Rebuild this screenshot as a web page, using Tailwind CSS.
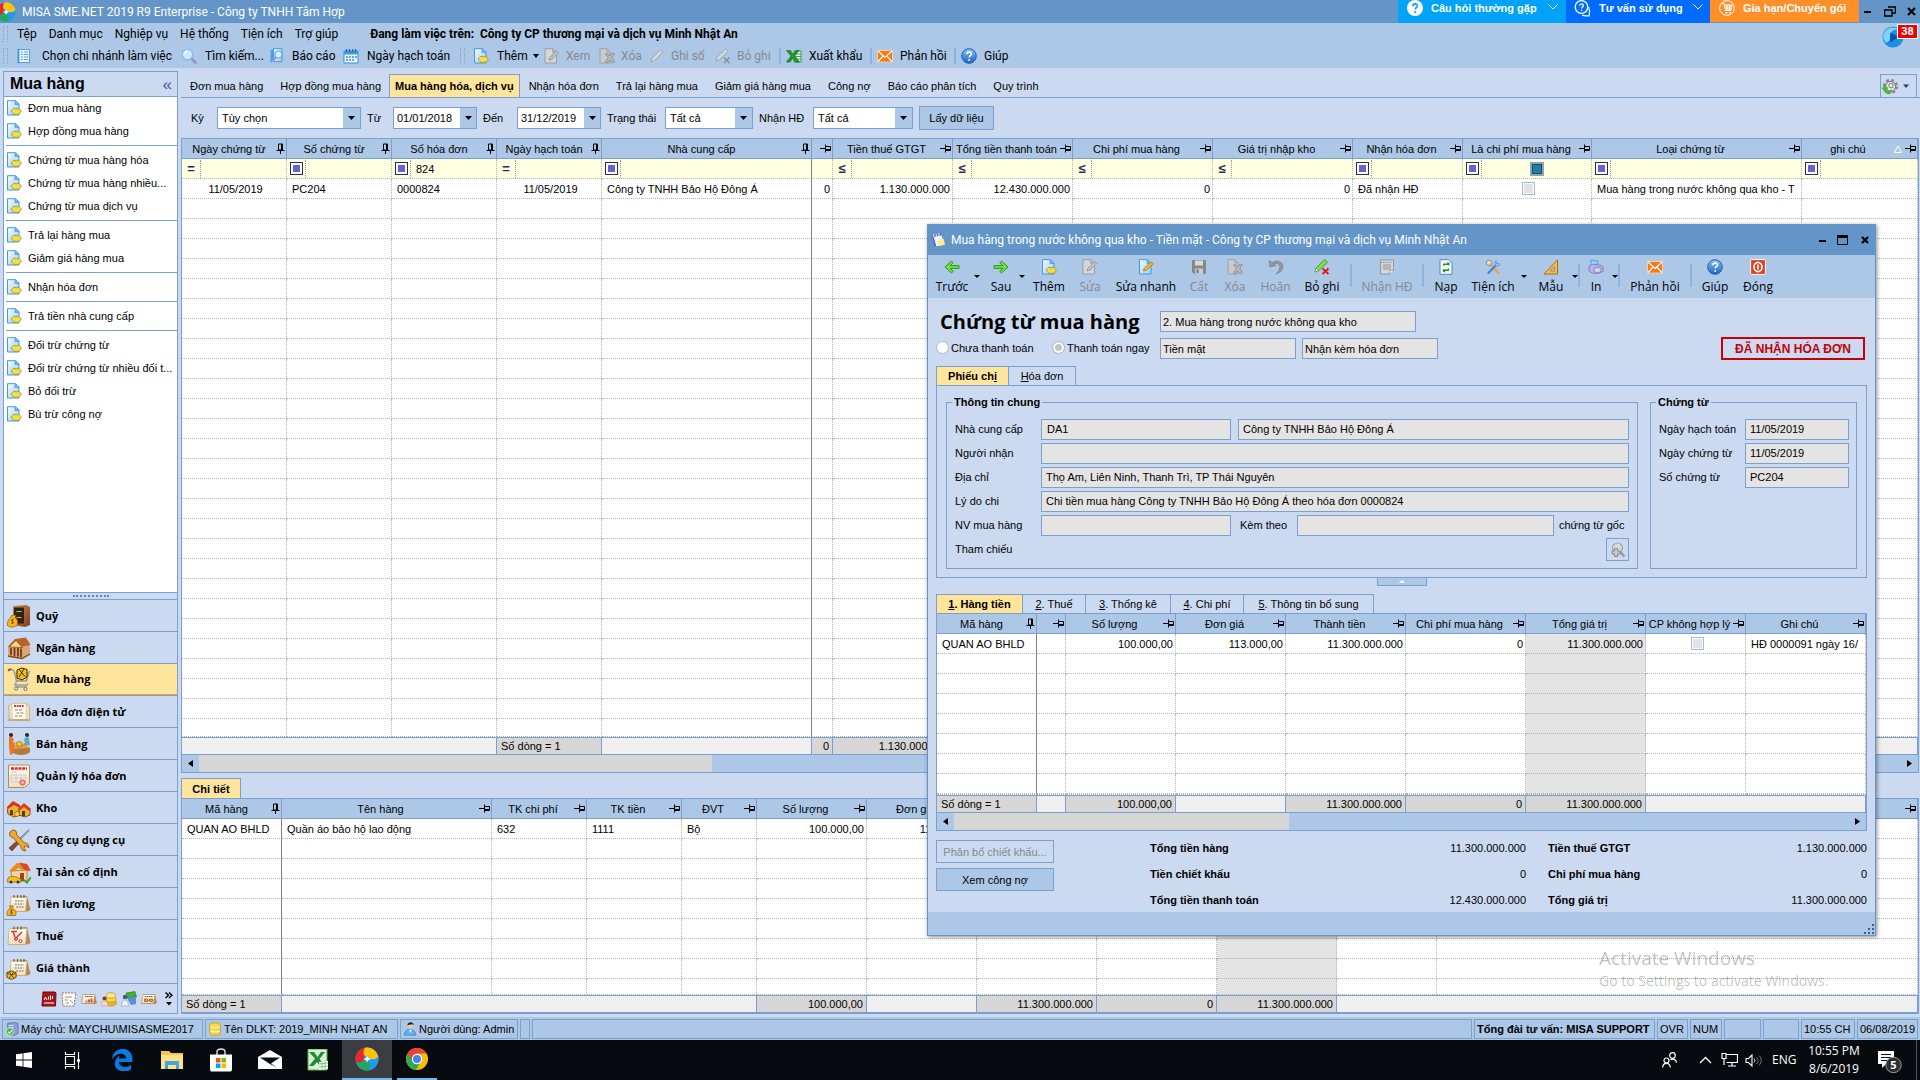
<!DOCTYPE html>
<html lang="vi">
<head>
<meta charset="utf-8">
<title>MISA SME.NET 2019 R9 Enterprise</title>
<script src="https://cdn.jsdelivr.net/npm/@tailwindcss/browser@4"></script>
</head>
<body class="relative flex h-screen min-h-[900px] flex-col overflow-hidden bg-[#cbdaf0] font-['Liberation_Sans',Arial,sans-serif] text-[11px] leading-4 text-black">

<!-- Icon sprite -->
<svg width="0" height="0" class="absolute" aria-hidden="true">
  <defs>
    <linearGradient id="gpage" x1="0" y1="0" x2="1" y2="1"><stop offset="0" stop-color="#f4fbff"/><stop offset="1" stop-color="#9dccf2"/></linearGradient>
    <linearGradient id="gblue" x1="0" y1="0" x2="0" y2="1"><stop offset="0" stop-color="#8cc4f7"/><stop offset="1" stop-color="#1a62c4"/></linearGradient>
    <linearGradient id="gbrown" x1="0" y1="0" x2="1" y2="1"><stop offset="0" stop-color="#c98a5a"/><stop offset="1" stop-color="#7a3f20"/></linearGradient>
    <linearGradient id="gpaper" x1="0" y1="0" x2="0" y2="1"><stop offset="0" stop-color="#fffdf6"/><stop offset="1" stop-color="#f1dfc2"/></linearGradient>
  </defs>
  <symbol id="misa" viewBox="0 0 24 24"><circle cx="12" cy="12" r="11.500" fill="#2b9be8"/><path d="M12 .5A11.500 11.500 0 0 0 1 15c3 2 7 0 8-3 .5-3-1-5 3-11.500z" fill="#e8262c"/><path d="M10 .7c6-1.500 12 3 13.300 9-2 3-6 4-9 1.300C12 9 8 9 8.500 5c.2-2 1-3.500 1.500-4.300z" fill="#fdc20a"/><path d="M1 15c2 5.500 7 9 12.500 8.300 3-2.500 3-6.500 0-9-2-1.500-4-1-6.500.5-2 1-4 1-6 .2z" fill="#22a85a"/><path d="M23.400 10c.8 6-3 12-9.900 13.300 2.500-3 2-6 0-9 1-2 3-1.500 5-2 2-.3 3.500-1 4.900-2.300z" fill="#1c9cf0"/><path d="M12 9l1.500 2 2.500 1-2.500 1-1.500 2.500-1-2.500-2.500-1 2.500-1z" fill="#fff"/></symbol>
  <symbol id="docadd" viewBox="0 0 16 16"><path d="M1.500.7h8L13 4v11H1.500z" fill="url(#gpage)" stroke="#3f9ae0"/><path d="M9 .7V4.500h4" fill="#6fb6ee" stroke="#3f9ae0" stroke-width=".7"/><path d="M5 11l1.500-1.500L8 8.200l2.200.6 2.300-.6 1.200 1.300L15.500 11l-1.200 1.600-1.300 1.600-2.500.2-2.500-.1-1.600-1.500z" fill="#efe04a" stroke="#a39014" stroke-width=".8"/></symbol>
  <symbol id="docedit" viewBox="0 0 16 16"><path d="M1.500.7h8L13 4v11H1.500z" fill="url(#gpage)" stroke="#3f9ae0"/><path d="M9 .7V4.500h4" fill="#6fb6ee" stroke="#3f9ae0" stroke-width=".7"/><path d="M5.500 12l.8-2.800 7-6.400 2 2-7 6.400z" fill="#f5b72e" stroke="#9a6b10" stroke-width=".7"/></symbol>
  <symbol id="doceditg" viewBox="0 0 16 16"><path d="M1 .7h8L12.500 4v11H1z" fill="#d4d6d9" stroke="#9a9ea3"/><path d="M8.500 .7V4.500h4" fill="#b3b6ba" stroke="#9a9ea3" stroke-width=".7"/><path d="M5 12l.8-2.800 7-6.400 2 2-7 6.400z" fill="#c0c2c5" stroke="#888" stroke-width=".7"/></symbol>
  <symbol id="docdelg" viewBox="0 0 16 16"><path d="M1 .7h7L11 4v11H1z" fill="#c9cbce" stroke="#9a9ea3"/><path d="M7.500 .7V4.500h4" fill="#aaadb1"/><path d="M6.500 6l2-.5 2.200 2.500 2.500-3 2 .7-2.500 4 2.800 4-2 1.200-2.700-3-2.500 3-2-1.200 3-4z" fill="#b9bbbe" stroke="#7f8286" stroke-width=".8"/></symbol>
  <symbol id="list" viewBox="0 0 16 16"><path d="M2.500 1.500h11v13h-11z" fill="#eef7ff" stroke="#4ba3e3"/><path d="M2.500 1v14" stroke="#2d8ad6" stroke-width="2" stroke-dasharray="1.500 1"/><path d="M5 4h2M5 6.500h2M5 9h2M5 11.500h2M8 4h4M8 6.500h4M8 9h4M8 11.500h4" stroke="#4ba3e3"/></symbol>
  <symbol id="search" viewBox="0 0 16 16"><path d="M10 10l4.500 4.500" stroke="#8f96c8" stroke-width="2.600" stroke-linecap="round"/><circle cx="6.500" cy="6.500" r="5.300" fill="#cfeaff" stroke="#7fbdf0" stroke-width="1.300"/><path d="M3.500 6a3.200 3.200 0 0 1 3-2.700" stroke="#fff" stroke-width="1.400" fill="none"/></symbol>
  <symbol id="report" viewBox="0 0 16 16"><path d="M1.500 2.500l3-2v12l-3 2.500z" fill="#4ba3e3"/><path d="M4.500.7H13v13H4.500z" fill="url(#gpage)" stroke="#3f9ae0"/><path d="M7 9l-3 4" stroke="#8f96c8" stroke-width="2"/><circle cx="9.500" cy="6.500" r="3.500" fill="#d8efff" stroke="#6aa5dc" stroke-width="1.200"/></symbol>
  <symbol id="cal" viewBox="0 0 16 16"><path d="M1 3h14v12H1z" fill="#f2f9ff" stroke="#2f8fd8"/><path d="M1 3h14v3.500H1z" fill="#3f9ae0"/><path d="M3.500 1v3M6.500 1v3M9.500 1v3M12.500 1v3" stroke="#1b6cb4" stroke-width="1.200"/><path d="M3 9h2M6 9h2M9 9h2M12 9h2M3 12h2M6 12h2M9 12h2" stroke="#2f8fd8" stroke-width="1.600"/></symbol>
  <symbol id="pen" viewBox="0 0 16 16"><path d="M2 14l1-4L11.500 1.500l2.500 2.500L5.500 12.800z" fill="#d5d7da" stroke="#9a9ea3" stroke-width=".9"/></symbol>
  <symbol id="penx" viewBox="0 0 16 16"><path d="M1 13l1-4L10.500.8l2.500 2.500L4.500 11.800z" fill="#d5d7da" stroke="#9a9ea3" stroke-width=".9"/><path d="M9 9.500l5.500 5.500M14.500 9.500L9 15" stroke="#8a8d90" stroke-width="1.400"/></symbol>
  <symbol id="penxc" viewBox="0 0 16 16"><path d="M1 13l1-4L10.500.8 13.500 3.300 4.500 11.800z" fill="#7ee04a" stroke="#3e9a1e" stroke-width=".9"/><path d="M2 9l2.500 2.800L1 13z" fill="#fff" stroke="#3e9a1e" stroke-width=".5"/><path d="M8.500 9.500l6 5.500M14.500 9.500l-6 5.500" stroke="#e51515" stroke-width="1.800"/></symbol>
  <symbol id="xls" viewBox="0 0 16 16"><path d="M8 3h7v11H8z" fill="#e9f7e6" stroke="#1d8a2c" stroke-width=".8"/><path d="M9 6h6M9 8.500h6M9 11h6" stroke="#1d8a2c" stroke-width=".8"/><path d="M.5 2.500h4l2.500 4 3-4h3L8.800 8l4.700 6H9.500L6.800 10 4 14H.5L5 8z" fill="#1d9a2c" stroke="#0c6a1a" stroke-width=".6"/></symbol>
  <symbol id="mail" viewBox="0 0 16 16"><path d="M.5 2.500h15v11.500H.5z" fill="#f47b17" stroke="#ffd9b0" stroke-width=".8"/><path d="M1 3l7 6.500L15 3M1 13.500l5.200-5.500M15 13.500L9.800 8" stroke="#fff" stroke-width="1.100" fill="none"/></symbol>
  <symbol id="help" viewBox="0 0 16 16"><circle cx="8" cy="8" r="7.300" fill="url(#gblue)" stroke="#1f5fb5"/><path d="M5.800 6.200c0-3 4.600-3 4.600-.3 0 1.800-2.200 1.700-2.200 3.600" stroke="#fff" stroke-width="1.500" fill="none"/><circle cx="8.200" cy="12" r="1" fill="#fff"/></symbol>
  <symbol id="left" viewBox="0 0 16 16"><path d="M1 8l6.500-6 1.700 1.700L6.300 6.600H15v2.800H6.300l2.900 2.900L7.500 14z" fill="#6ee04a" stroke="#2c9a1c" stroke-width="1"/></symbol>
  <symbol id="right" viewBox="0 0 16 16"><path d="M15 8L8.500 2 6.800 3.700l2.900 2.900H1v2.800h8.700l-2.900 2.900L8.500 14z" fill="#6ee04a" stroke="#2c9a1c" stroke-width="1"/></symbol>
  <symbol id="save" viewBox="0 0 16 16"><path d="M1 1h14v14H3l-2-2z" fill="#85888c"/><path d="M4 1.500h8v5H4z" fill="#d9dadc"/><path d="M4 9.500h8V15H4z" fill="#c9cbce"/><path d="M5.500 10.500h2V14h-2z" fill="#6d7074"/></symbol>
  <symbol id="undo" viewBox="0 0 16 16"><path d="M1 1.500l1 6.500 6-1.500-2-1.300c3-1.800 6-.2 5.800 3C11.600 11 10 13 8 14.800c4-.8 6.800-3.500 7-7C15.200 3 9.500.2 4 3.500z" fill="#94979b" stroke="#777a7e" stroke-width=".6"/></symbol>
  <symbol id="invg" viewBox="0 0 16 16"><path d="M1.500 1h13v10l-3.500 4H1.500z" fill="#d3d5d8" stroke="#92959a"/><path d="M1.500 3.500h13" stroke="#92959a" stroke-dasharray="1.500 1"/><path d="M4 6h8M4 8h8M4 10h8" stroke="#92959a"/><path d="M11 15v-3.500h3.500" fill="#fff" stroke="#92959a" stroke-width=".8"/></symbol>
  <symbol id="reload" viewBox="0 0 16 16"><path d="M2 .7h8.500L14 4v11.300H2z" fill="#fff" stroke="#4f86c8"/><path d="M5 7V4.500h4.500L8.500 3l3 .8V7L10.300 6H7z" fill="#159a2a"/><path d="M11 9v3H7l.8 1.500-3-.7V9.500l1.200 1H9z" fill="#159a2a"/></symbol>
  <symbol id="tools" viewBox="0 0 16 16"><path d="M4.500 4.500l9 9.500" stroke="#e7a84e" stroke-width="2.600" stroke-linecap="round"/><circle cx="4" cy="3.800" r="2.700" fill="#e9dcc2" stroke="#8c8c8c"/><path d="M12 5L3.500 14" stroke="#3d8bdc" stroke-width="2.400" stroke-linecap="round"/><path d="M11 1.500l.5 2.800 3.500.6-.5 1.800-3.500.3L9.500 5z" fill="#8ec4f2" stroke="#3d8bdc" stroke-width=".6"/></symbol>
  <symbol id="ruler" viewBox="0 0 16 16"><path d="M14.500.8V15H1z" fill="#f0bd55" stroke="#a9711b"/><path d="M11.500 7.500V12H7z" fill="#adc7e7" stroke="#a9711b" stroke-width=".7"/></symbol>
  <symbol id="print" viewBox="0 0 16 16"><path d="M3 1l7 1-1 6-6-1z" fill="#8ed0fa" stroke="#3f8fd0" stroke-width=".7"/><path d="M1 7c2-2 12-2 14 1v4c-2 3-11 3.500-14 0z" fill="#b7b4e2" stroke="#7571b8" stroke-width=".8"/><ellipse cx="9.500" cy="11" rx="3.600" ry="2.800" fill="#d3d1f0" stroke="#7571b8" stroke-width=".7"/></symbol>
  <symbol id="power" viewBox="0 0 16 16"><rect x=".6" y=".6" width="14.800" height="14.800" rx="1" fill="#e2411c" stroke="#fff"/><ellipse cx="8" cy="8" rx="4" ry="4.600" fill="none" stroke="#fff" stroke-width="1.700"/><path d="M8 5.500v5" stroke="#fff" stroke-width="1.600"/></symbol>
  <symbol id="zoomg" viewBox="0 0 16 16"><path d="M10 10l4.500 4.500" stroke="#9a9da1" stroke-width="2.600"/><circle cx="7.500" cy="6" r="5" fill="#d8d9db" stroke="#a2a4a7" stroke-width="1.200"/><path d="M4.500 6.500h3v2.500h2.500v3H7.500V14.500h-3V12H2V9h2.500z" fill="#c9cacc" stroke="#7f8286" stroke-width=".9"/></symbol>
  <symbol id="note" viewBox="0 0 16 16"><path d="M1 3l10-2.500 3.500 12L4 15z" fill="#5b55c8"/><path d="M3 4.500l9-2 3 10.500-9 2z" fill="#e8f6ff"/><path d="M8 8l6.500-1.500 1.500 7-8 1.500z" fill="#ffe98a"/><path d="M3 1.500v3M6 1v3M9 .3v3" stroke="#e8ebff" stroke-width="1.200"/></symbol>
  <symbol id="pinv" viewBox="0 0 9 12"><path d="M2.500 1h4v6h-4zM.5 7.500h8M4.500 7.500V11M5.500 1v6" stroke="#000" fill="none"/></symbol>
  <symbol id="pinh" viewBox="0 0 12 9"><path d="M5.500 2.500h5v4h-5zM5.500.5v8M0 4.500h5.500M6 5.500h4.500" stroke="#000" fill="none"/></symbol>
  <symbol id="n-quy" viewBox="0 0 24 24"><path d="M6 2l13-1 4 2v18l-5 2-12-2z" fill="url(#gbrown)"/><path d="M7 3.500h10v16H7z" fill="#3a1e10"/><path d="M8.500 5h7v5h-7z" fill="#1f2a1a"/><path d="M9.500 7.500h5M9.500 13.500h5" stroke="#b9c44a" stroke-width="1.200"/><path d="M4 12l3-1 2 .5-1 2c3 2 3 5 2 8-3 2-7 2-9.500 0C0 18 1.500 15 4 13.500z" fill="#f3b71c" stroke="#8a5a08" stroke-width=".7"/><path d="M6.800 15.800c-2-1-3.200 1-1.200 1.700s1 2.600-1.400 1.600M5.500 14.800v5" stroke="#7a3b00" stroke-width=".8" fill="none"/></symbol>
  <symbol id="n-bank" viewBox="0 0 24 24"><path d="M1 12L10 3l12 2.500L23 11v8l-8 4-14-2z" fill="#d9a678"/><path d="M.5 11L8 3l11-1.500L23.500 9l-8 1.500z" fill="#b5642e"/><path d="M2 11L9 4.500l6.500 7z" fill="#f5dd7a" stroke="#8a4a18" stroke-width=".8"/><path d="M4 12v7M7.500 12v8M11 12v8.500M14 12.500V21" stroke="#6e3512" stroke-width="1.700"/><path d="M1 20l14 2.500L23 18" stroke="#8a4a18" stroke-width="1.400" fill="none"/></symbol>
  <symbol id="n-cart" viewBox="0 0 24 24"><path d="M1 3l3-1 3 2 2.500 10h10L22 5l1-1" stroke="#9a9aa0" stroke-width="1.400" fill="none"/><path d="M1 3.500l3-1.300" stroke="#a0522d" stroke-width="2"/><path d="M8 6h14M8.500 8.500h13M9 11h12M11 5v9M15 5v9M19 5v9" stroke="#8c8c92" stroke-width=".7"/><path d="M10 3l5-2 5 1.500V10l-5 3-5-2z" fill="#f2c21a" stroke="#3c2a05" stroke-width="1"/><path d="M12 2.500l6 7M17 2l-5 8" stroke="#3c2a05" stroke-width="1"/><path d="M9.500 14l-1.500 4h12l1-2M9 20h11" stroke="#9a9aa0" stroke-width="1.300" fill="none"/><circle cx="9" cy="21.500" r="1.600" fill="#e5e5ea" stroke="#777"/><circle cx="18.500" cy="22" r="1.600" fill="#e5e5ea" stroke="#777"/></symbol>
  <symbol id="n-einv" viewBox="0 0 24 24"><path d="M1.500 6l3-2h15l3 2v13l-1 1H2.500z" fill="#efe0c2" stroke="#c9a264" stroke-width=".8"/><path d="M5 3.500h14v16H5z" fill="#fffdf4" stroke="#d8bd8c" stroke-width=".7"/><path d="M7 6h10" stroke="#e03a2a" stroke-width="1.800" stroke-dasharray="2 .6"/><path d="M8 10h8M9.500 13h7M8 16h8" stroke="#8a6f4a" stroke-width=".9" stroke-dasharray="3 1"/><path d="M.5 20h23" stroke="#c9a264" stroke-width="1.600"/></symbol>
  <symbol id="n-sell" viewBox="0 0 24 24"><ellipse cx="14" cy="17" rx="9" ry="5" fill="#d8a15a"/><path d="M5 17v3c3 4 15 4 18 0v-4" fill="#b9783a"/><circle cx="4" cy="3" r="2" fill="#3a2412"/><path d="M2 5l4 .5L8 12l-1 6-2 5-2-.5-1-8z" fill="#e9772a"/><circle cx="20" cy="3" r="2" fill="#2a2a2a"/><path d="M17.500 6l4-1 1.500 8h-6z" fill="#5fa3bf"/><path d="M6 9l6 4 6-3" stroke="#f0c090" stroke-width="1.600" fill="none"/><path d="M9 11l4-2 3 4-5 2z" fill="#f3c521" stroke="#8a5a08" stroke-width=".6"/></symbol>
  <symbol id="n-inv" viewBox="0 0 24 24"><path d="M1.500 1h21v18l-5 4.500h-16z" fill="url(#gpaper)" stroke="#b98a50"/><path d="M4 4.500h16" stroke="#e02a2a" stroke-width="2.600" stroke-dasharray="3 .7"/><path d="M4 8h6M4 11h15v7H4zM4 14h15M9 11v7M14 11v7" stroke="#c8c0c4" stroke-width=".8" fill="none"/><circle cx="15.500" cy="18.500" r="2.600" fill="#f5a9a0" stroke="#d84a4a"/></symbol>
  <symbol id="n-kho" viewBox="0 0 24 24"><path d="M0 12l5-5 8 3v9l-6 2-6-3z" fill="#e2b83a" stroke="#7a2a10" stroke-width=".8"/><path d="M0 11l6-6 7 4v3L7 9l-6 4z" fill="#d8321c"/><path d="M12 13l5-4 6 4v6l-5 2-6-2z" fill="#e2b83a" stroke="#7a2a10" stroke-width=".8"/><path d="M11 13l6-6 7 6-2 2-5-4-5 4z" fill="#e0391f"/><path d="M3 14h3v5H3zM15 15h3v5h-3z" fill="#6e3512"/><circle cx="10" cy="18" r="2.500" fill="#f7d44a" stroke="#8a5a08" stroke-width=".7"/></symbol>
  <symbol id="n-tool" viewBox="0 0 24 24"><path d="M22 2L10 14" stroke="#8d949c" stroke-width="1.800"/><path d="M11 12l2 2-8 9-3-3z" fill="#8a4a30" stroke="#4a2414" stroke-width=".6"/><path d="M3 4l3-2c3 0 4 2 3.500 4.500l8 8.500c3 0 5 2 4 5l-2-2-2 .5-.5 2 2 2c-3 1-5-1-5-4L6 9.500C3 9.500 2 7 3 4z" fill="#f0a92a" stroke="#7a4a08" stroke-width=".8"/></symbol>
  <symbol id="n-asset" viewBox="0 0 24 24"><path d="M4 11l16-1v11H5z" fill="#f2d7a0" stroke="#a85a1a" stroke-width=".7"/><path d="M2 11l8-8 11 2 2.500 6-8-1-4-2-6 4z" fill="#f0861f"/><path d="M12 2.500l8 1.500 3.500 7-6-1z" fill="#dd4a1c"/><path d="M13 13h4v8h-4z" fill="#a8430f"/><path d="M1 18c2-2 8-2 10 0l3 1v3H0z" fill="#f5c41c" stroke="#8a5a08" stroke-width=".7"/><circle cx="4" cy="22" r="1.500" fill="#333"/><circle cx="11" cy="22" r="1.500" fill="#333"/><path d="M17 20l3 2.500L24 17" stroke="#3aa82a" stroke-width="2" fill="none"/></symbol>
  <symbol id="n-cal" viewBox="0 0 24 24"><path d="M4 5l16-1 3.500 14-3 1.500H4z" fill="#b98a50"/><path d="M4 5h16l-1.500 14.500H3z" fill="url(#gpaper)" stroke="#c9a264" stroke-width=".7"/><path d="M7 3v3M10.500 3v3M14 3v3M17 3v3" stroke="#6a5a4a" stroke-width="1.100"/><path d="M8 9h9M7.500 12h9M9 15h8" stroke="#7a6a5a" stroke-dasharray="2 .8"/></symbol>
  <symbol id="n-bag" viewBox="0 0 12 12"><path d="M4 1h4L7 3.500c4 2 4.500 5 3.500 8h-9C.5 8.500 1 5.500 5 3.500z" fill="#f3b71c" stroke="#8a5a08" stroke-width=".8"/><path d="M7.500 5.800c-2-1-3.300 1-1.500 1.700s1 2.500-1.500 1.500M6 4.800v5.500" stroke="#7a3b00" stroke-width=".8" fill="none"/></symbol>
  <symbol id="n-box" viewBox="0 0 12 12"><path d="M1 4l5-2 5 2v5l-5 2.500L1 9z" fill="#f0c02a" stroke="#5a3b05"/><path d="M3.500 3l5 7M8.500 3l-5 7M1 4.500l5 2 5-2" stroke="#5a3b05" stroke-width=".9" fill="none"/></symbol>
  <symbol id="n-tax" viewBox="0 0 24 24"><path d="M5 4l15-1 3.500 16-3 1.500H5z" fill="#b98a50"/><path d="M2 4.500h18L18.500 20.500H1z" fill="url(#gpaper)" stroke="#c9a264" stroke-width=".7"/><path d="M7 2.500v3M10.500 2.500v3M14 2.500v3" stroke="#6a5a4a" stroke-width="1.100"/><path d="M4 7.500h6M6 7.500L8 13M15 8L8 15" stroke="#e03030" stroke-width="1.500"/><circle cx="9" cy="15" r="1.500" fill="none" stroke="#e03030"/><circle cx="13.500" cy="17" r="1.500" fill="none" stroke="#e03030"/></symbol>
  <symbol id="s-book" viewBox="0 0 16 16"><path d="M2 1h12l1 1-.5 13H1z" fill="#a8161c" stroke="#6a0a10"/><path d="M3 9l1.500-3L6 9M7.500 8.500v-3M9.500 9V4.500M11.500 8V5M3 12h10" stroke="#fff" stroke-width="1" fill="none"/></symbol>
  <symbol id="s-doc" viewBox="0 0 16 16"><path d="M1 2h14l-2 13H2z" fill="#fffdf6" stroke="#8a7a60" stroke-dasharray="2 1"/><path d="M4 6h7M4 9h3M9 9l3 3M5 12h3" stroke="#9a8a9a"/></symbol>
  <symbol id="s-chart" viewBox="0 0 16 16"><path d="M3 3.500h11L16 12l-2 1H2z" fill="#b98a50"/><path d="M2 3.500h12L12.500 12.500H.5z" fill="url(#gpaper)" stroke="#b98a50" stroke-width=".7"/><path d="M4 5.500h8" stroke="#6a5a4a" stroke-dasharray="1.500 .5"/><path d="M5.500 11.500V9.500" stroke="#4a9ad0" stroke-width="2"/><path d="M8 11.500V8.500M10.500 11.500V7.500" stroke="#e05030" stroke-width="2"/></symbol>
  <symbol id="s-plan" viewBox="0 0 16 16"><path d="M3 3.500h11L16 12l-2 1H2z" fill="#b98a50"/><path d="M2 3.500h12L12.500 12.500H.5z" fill="url(#gpaper)" stroke="#b98a50" stroke-width=".7"/><path d="M4 5.500h8" stroke="#6a5a4a" stroke-dasharray="1.500 .5"/><path d="M3.500 8h3v2.500h-3zM8.500 8h3v2.500h-3zM6.500 9.200h2" fill="#e9a060" stroke="#a85a1a" stroke-width=".8"/></symbol>
  <symbol id="s-coin" viewBox="0 0 16 16"><ellipse cx="10" cy="12" rx="5.500" ry="3" fill="#f3b71c" stroke="#b07a08" stroke-width=".6"/><ellipse cx="10" cy="8.500" rx="5" ry="2.800" fill="#ffd84a" stroke="#b07a08" stroke-width=".6"/><ellipse cx="10" cy="4.500" rx="4.500" ry="2.800" fill="#ffe88a" stroke="#b07a08" stroke-width=".6"/><circle cx="3.500" cy="7.500" r="2" fill="#7a3b20"/><path d="M0 15c0-7 7-7 7 0z" fill="#f2dcd0" stroke="#b98a70" stroke-width=".5"/></symbol>
  <symbol id="s-money" viewBox="0 0 16 16"><path d="M5 2l9-1.500L15.500 6 6 7z" fill="#3cae3a" stroke="#1b7a1a" stroke-width=".6"/><path d="M6 7l9-.5V13l-5 1z" fill="#5a8ae0"/><circle cx="4" cy="6" r="2.200" fill="#4a5a70"/><path d="M.5 15c0-8 7-8 7 0z" fill="#eef2f8" stroke="#8a9ab0" stroke-width=".6"/></symbol>
  <symbol id="srv" viewBox="0 0 16 16"><path d="M3 1.500l8-1 4 1.500v11l-5 2.500-7-2z" fill="#8f9ad8" stroke="#5058a8" stroke-width=".7"/><path d="M4 4h6M4 6.500h6" stroke="#dfe4ff"/><circle cx="5.500" cy="11" r="4.300" fill="#3fb83a" stroke="#eaffea" stroke-width=".8"/><path d="M3.500 11l1.500 2 3-3.500" stroke="#fff" stroke-width="1.300" fill="none"/></symbol>
  <symbol id="db" viewBox="0 0 16 16"><rect x="2" y="1" width="12" height="14" rx="3" fill="#f7d84e" stroke="#d09a14"/><path d="M2.500 5.500c2 1.500 9 1.500 11 0M2.500 10c2 1.500 9 1.500 11 0" stroke="#fff6c0" fill="none" stroke-width="1.300"/></symbol>
  <symbol id="user" viewBox="0 0 16 16"><circle cx="8.500" cy="4" r="3.200" fill="#f1c9a0"/><path d="M5 4c0-5 8-5 7 0l-1-1.500-4 .5z" fill="#2a2018"/><path d="M1.500 15c0-9 13-9 13 0z" fill="#5fb4ee" stroke="#2a7cc4" stroke-width=".8"/><path d="M7 8.500l1.500 4 1.500-4z" fill="#fff"/></symbol>
  <symbol id="gear" viewBox="0 0 20 20"><circle cx="10" cy="10" r="7.500" fill="none" stroke="#85888c" stroke-width="3" stroke-dasharray="3 2.900"/><circle cx="10" cy="10" r="6" fill="#e4e6e8" stroke="#7d8084" stroke-width="1.300"/><circle cx="10.500" cy="9" r="2.400" fill="#f7f8f9" stroke="#7d8084" stroke-width="1.200"/><path d="M0 12l3.500-3L7 12l-2 .5c2 3 4 3 6 1.500l.5 2.500c-3.500 3-8 2-9.500-3z" fill="#4fc03a" stroke="#248a18" stroke-width=".6"/></symbol>
  <symbol id="globe" viewBox="0 0 24 24"><circle cx="12" cy="12" r="11.500" fill="#1d8fe8"/><path d="M2 8C5 1 14 0 19 4c-6-1-10 2-10 8 0 4-2 6-5 6C1 15 1 11 2 8z" fill="#7fd0fb"/><path d="M9 7l9 5-9 6z" fill="#0b52a8"/></symbol>
</svg>

<!-- Title bar -->
<header class="flex h-[23px] shrink-0 items-center bg-[#6495c8] font-[Roboto,sans-serif]">
  <svg class="-ml-1 h-5 w-5"><use href="#misa"/></svg>
  <h1 class="ml-[6px] flex-1 truncate text-[12px] text-white">MISA SME.NET 2019 R9 Enterprise - Công ty TNHH Tâm Hợp</h1>
  <div class="flex h-full font-['Liberation_Sans',Arial,sans-serif] text-[12px] font-bold text-white">
    <button class="flex w-[168px] items-start bg-[#00a3f5] pl-[9px]"><svg class="h-4 w-4" viewBox="0 0 16 16"><circle cx="8" cy="8" r="8" fill="#fff"/><path d="M5.800 6.200c0-3 4.600-3 4.600-.3 0 1.800-2.200 1.700-2.200 3.600" stroke="#00a3f5" stroke-width="1.600" fill="none"/><circle cx="8.200" cy="12" r="1.100" fill="#00a3f5"/></svg><span class="ml-2 flex-1 truncate text-left text-[11px]">Câu hỏi thường gặp</span><svg class="mt-1 mr-2 h-[6px] w-[10px]" viewBox="0 0 10 6"><path d="M.5.500L5 5 9.500.500" stroke="#fff" fill="none"/></svg></button>
    <button class="flex w-[144px] items-start bg-[#006cff] pl-[8px]"><svg class="h-[17px] w-[17px]" viewBox="0 0 17 17"><circle cx="7.500" cy="7" r="6.300" fill="none" stroke="#fff" stroke-width="1.300"/><path d="M5.700 5.700c0-2.400 3.700-2.400 3.700-.2 0 1.400-1.800 1.400-1.800 3M7.600 9.800v1.200" stroke="#fff" stroke-width="1.300" fill="none"/><path d="M14.500 7c2.500 4 .5 6.500.5 9-1.500-.5-4.500.5-7-1" stroke="#fff" stroke-width="1.200" fill="none"/></svg><span class="ml-2 flex-1 truncate text-left text-[11px]">Tư vấn sử dụng</span><svg class="mt-1 mr-[7px] h-[6px] w-[10px]" viewBox="0 0 10 6"><path d="M.5.500L5 5 9.500.500" stroke="#fff" fill="none"/></svg></button>
    <button class="mb-px flex w-[149px] items-start bg-[#ff9029] pl-[9px]"><svg class="h-4 w-4" viewBox="0 0 16 16"><circle cx="8" cy="8" r="7.400" fill="none" stroke="#fff"/><path d="M3 3.500h2l1.500 7h5.500l1-5.500H5.500M6 7h7M6.500 9h6M8 5v5.500M10.500 5v5.500" stroke="#fff" fill="none"/><circle cx="7.500" cy="12.700" r="1" fill="#fff"/><circle cx="11" cy="12.700" r="1" fill="#fff"/></svg><span class="ml-2 truncate text-[11px]">Gia hạn/Chuyển gói</span></button>
    <div class="flex w-[61px] items-center justify-between pr-[4px] pl-[5px]">
      <button aria-label="Thu nhỏ"><svg class="h-[10px] w-[8px]" viewBox="0 0 8 10"><path d="M0 5h7" stroke="#000" stroke-width="2"/></svg></button>
      <button aria-label="Khôi phục"><svg class="h-[11px] w-[12px]" viewBox="0 0 12 11"><path d="M4 1h7.500v6H8M.5 4h7.500v6H.5z" stroke="#000" stroke-width="1.500" fill="none"/></svg></button>
      <button aria-label="Đóng"><svg class="h-[9px] w-[9px]" viewBox="0 0 9 9"><path d="M1 1l7 7M8 1L1 8" stroke="#000" stroke-width="2.200"/></svg></button>
    </div>
  </div>
</header>

<!-- Menu and toolbar -->
<div class="flex h-[45px] shrink-0 bg-[#adc7e7] font-[Roboto,sans-serif] text-[12px]">
  <div class="flex min-w-0 flex-1 flex-col">
    <nav class="flex h-[22px] items-center pl-[3px]">
      <span class="h-4 w-[5px] border-x border-dotted border-[#8aa3c2]"></span>
      <div class="flex pl-[9px]" id="menu"></div>
      <b class="ml-[20px] whitespace-pre">Đang làm việc trên:  Công ty CP thương mại và dịch vụ Minh Nhật An</b>
    </nav>
    <div class="flex h-[22px] items-center pl-[3px]" id="toolbar"></div>
  </div>
  <div class="relative m-[3px_16px_0_0] h-[22px] w-[22px]">
    <svg class="h-[22px] w-[22px]"><use href="#globe"/></svg>
    <span class="absolute -top-[2px] left-[15px] flex h-[15px] w-[21px] items-center justify-center border border-white bg-[#f00000] text-[11px] font-bold text-white">38</span>
  </div>
</div>

<div class="flex min-h-0 flex-1">
  <!-- Sidebar -->
  <aside class="mt-[3px] mb-[3px] ml-[3px] flex w-[175px] shrink-0 flex-col border border-[#7ba0d0] bg-white">
    <div class="flex h-[25px] shrink-0 items-center justify-between border-b border-[#7ba0d0] bg-[#cbdaf0] pr-[5px] pl-[6px]">
      <h2 class="text-[16px] font-bold">Mua hàng</h2>
      <button aria-label="Thu gọn" class="text-[17px] leading-none text-[#3c5fa0]">«</button>
    </div>
    <nav class="flex min-h-0 flex-1 flex-col pl-[2px]" id="tasks"></nav>
    <div class="flex h-[7px] shrink-0 items-center justify-center border-t border-[#7ba0d0] bg-[#cbdaf0]"><span class="w-9 border-t-2 border-dotted border-[#5f8cc8]"></span></div>
    <nav class="flex shrink-0 flex-col bg-[#cbdaf0]" id="modules"></nav>
    <div class="flex h-[30px] shrink-0 items-center justify-end gap-[4px] border-t border-[#7ba0d0] bg-[#cbdaf0] pr-1" id="shortcuts"></div>
  </aside>

  <!-- Work area -->
  <main class="ml-[3px] flex min-w-0 flex-1 flex-col">
    <div class="mt-[6px] flex h-[24px] shrink-0 border-b border-[#7ba0d0]">
      <div class="flex flex-1" id="tabs"></div>
      <button aria-label="Tùy chọn" class="mr-[3px] flex w-[37px] items-center justify-between border border-b-0 border-[#7ba0d0] pr-[7px] pl-px"><svg class="h-[17px] w-[17px]"><use href="#gear"/></svg><svg class="h-[4px] w-[6px]" viewBox="0 0 6 4"><path d="M0 .5h6L3 4z" fill="#1d3f80"/></svg></button>
    </div>
    <form class="flex h-[40px] shrink-0 items-center pb-px pl-[10px]">
      <label for="ky" class="w-[26px]">Kỳ</label>
      <span class="relative h-[22px] w-[144px]"><select id="ky" class="h-full w-full appearance-none border border-[#7ba0d0] bg-white pl-1"><option>Tùy chọn</option></select><span class="pointer-events-none absolute inset-y-px right-px flex w-[17px] items-center justify-center bg-[#adc7e7]"><svg class="h-[4px] w-[7px]" viewBox="0 0 7 4"><path d="M0 0h7L3.500 4z"/></svg></span></span>
      <label for="tu" class="ml-[6px] w-[26px]">Từ</label>
      <span class="flex h-[22px] w-[84px] border border-[#7ba0d0] bg-white"><input id="tu" value="01/01/2018" class="w-[66px] pl-[3px]"><button type="button" aria-label="Chọn ngày" class="flex flex-1 items-center justify-center bg-[#adc7e7]"><svg class="h-[4px] w-[7px]" viewBox="0 0 7 4"><path d="M0 0h7L3.500 4z"/></svg></button></span>
      <label for="den" class="ml-[6px] w-[34px]">Đến</label>
      <span class="flex h-[22px] w-[84px] border border-[#7ba0d0] bg-white"><input id="den" value="31/12/2019" class="w-[66px] pl-[3px]"><button type="button" aria-label="Chọn ngày" class="flex flex-1 items-center justify-center bg-[#adc7e7]"><svg class="h-[4px] w-[7px]" viewBox="0 0 7 4"><path d="M0 0h7L3.500 4z"/></svg></button></span>
      <label for="tt" class="ml-[6px] w-[58px]">Trạng thái</label>
      <span class="relative h-[22px] w-[88px]"><select id="tt" class="h-full w-full appearance-none border border-[#7ba0d0] bg-white pl-1"><option>Tất cả</option></select><span class="pointer-events-none absolute inset-y-px right-px flex w-[17px] items-center justify-center bg-[#adc7e7]"><svg class="h-[4px] w-[7px]" viewBox="0 0 7 4"><path d="M0 0h7L3.500 4z"/></svg></span></span>
      <label for="nhd" class="ml-[6px] w-[54px]">Nhận HĐ</label>
      <span class="relative h-[22px] w-[100px]"><select id="nhd" class="h-full w-full appearance-none border border-[#7ba0d0] bg-white pl-1"><option>Tất cả</option></select><span class="pointer-events-none absolute inset-y-px right-px flex w-[17px] items-center justify-center bg-[#adc7e7]"><svg class="h-[4px] w-[7px]" viewBox="0 0 7 4"><path d="M0 0h7L3.500 4z"/></svg></span></span>
      <button type="button" class="ml-[6px] h-[24px] w-[75px] border border-[#7ba0d0] bg-[#adc7e7]">Lấy dữ liệu</button>
    </form>

    <section class="mr-px flex min-h-0 flex-1 flex-col border border-[#7ba0d0] bg-white">
      <div class="min-h-0 flex-1" id="grid-main"></div>
      <div class="flex h-[17px] shrink-0 items-center bg-[#adc7e7]"><button aria-label="Cuộn trái" class="flex w-[17px] justify-center"><svg class="h-[7px] w-[5px]" viewBox="0 0 5 7"><path d="M5 0v7L0 3.500z"/></svg></button><span class="h-full w-[513px] bg-[#d6d6d6]"></span><span class="flex-1"></span><button aria-label="Cuộn phải" class="flex w-[17px] justify-center"><svg class="h-[7px] w-[5px]" viewBox="0 0 5 7"><path d="M0 0v7l5-3.500z"/></svg></button></div>
    </section>

    <div class="mt-[5px] flex h-[20px] shrink-0"><button class="w-[60px] border border-b-0 border-[#7ba0d0] bg-[#ffe49b] font-bold">Chi tiết</button></div>
    <section class="mr-px mb-[3px] flex h-[216px] shrink-0 flex-col border border-[#7ba0d0] bg-white">
      <div class="min-h-0 flex-1" id="grid-detail"></div>
    </section>
  </main>
</div>

<!-- Status bar -->
<footer class="flex h-[23px] shrink-0 items-center gap-[2px] bg-[#adc7e7] px-[2px] text-[12px]" id="status"></footer>

<!-- Windows taskbar -->
<div class="flex h-10 shrink-0 items-stretch bg-[#070a0f] font-['Open_Sans',sans-serif] text-[11px] text-white">
  <div class="flex pl-[2px]">
    <button aria-label="Start" class="flex w-[44px] items-center justify-center"><svg class="h-4 w-4" viewBox="0 0 16 16"><path d="M0 2.300L6.600 1.400v6.200H0zM7.400 1.300L16 0v7.600H7.400zM0 8.400h6.600v6.200L0 13.700zM7.400 8.400H16V16l-8.600-1.300z" fill="#fff"/></svg></button>
    <button aria-label="Task View" class="flex w-[50px] items-center justify-center"><svg class="h-[17px] w-[17px]" viewBox="0 0 17 17"><path d="M2.500 4.500h9v8h-9zM2.500 0v2.500h9V0M2.500 17v-2.500h9V17M15.500 0v17" stroke="#fff" fill="none" stroke-width="1.200"/><circle cx="15.500" cy="8.500" r="1.600" fill="#fff"/></svg></button>
    <button aria-label="Edge" class="flex w-[52px] items-center justify-center"><svg class="h-[22px] w-[21px]" viewBox="0 0 21 22"><path d="M0 10C1-3 20-4 20.500 10v3H7c.5 6 8 6 12 3v4.500C11 25 1 21 3 13c.6-3 2.500-5 5-6.500C7.300 7.500 7 8.500 7 9.500h7C14 3 5 3 0 10z" fill="#0a7ae0"/></svg></button>
    <button aria-label="File Explorer" class="flex w-[48px] items-center justify-center"><svg class="h-5 w-[22px]" viewBox="0 0 22 20"><path d="M0 1h8l2 2h12v16H0z" fill="#f3c64f"/><path d="M0 5h22v14H0z" fill="#fde08a"/><path d="M4 19v-8h14v8h-3v-4H7v4z" fill="#3ea6dc"/></svg></button>
    <button aria-label="Store" class="flex w-[50px] items-center justify-center"><svg class="h-6 w-6" viewBox="0 0 24 24"><path d="M8 7V4c0-4 8-4 8 0v3" stroke="#ddd" stroke-width="1.400" fill="none"/><path d="M1 6.500h22V22l-1 1.500H2L1 22z" fill="#fff"/><path d="M7 10h4.500v4.500H7z" fill="#f25022"/><path d="M12.500 10H17v4.500h-4.500z" fill="#7fba00"/><path d="M7 15.500h4.500V20H7z" fill="#00a4ef"/><path d="M12.500 15.500H17V20h-4.500z" fill="#ffb900"/></svg></button>
    <button aria-label="Mail" class="flex w-[48px] items-center justify-center"><svg class="h-[20px] w-6" viewBox="0 0 24 20"><path d="M0 7L12 0l12 7v12H0z" fill="#fff"/><path d="M2 7.500h20l-9 6 6 4-7-3.500z" fill="#0a0d12"/></svg></button>
    <button aria-label="Excel" class="flex w-[48px] items-center justify-center"><svg class="h-[22px] w-[22px]" viewBox="0 0 22 22"><path d="M1 0h19v21H1z" fill="#d9efcf" stroke="#4fae4f"/><path d="M2 3h5l3.500 5L14 3h4l-5.500 7L18 17h-5l-3-4-3.500 4H2l6-7.500z" fill="#1d8a3c"/><path d="M12 13l9-1v8l-9 1z" fill="#fff"/><path d="M12 15l9-1M12 18l9-1M15 13v8M18 12.500v8" stroke="#4fae4f" stroke-width=".7"/></svg></button>
    <button aria-label="MISA" class="mr-[5px] flex w-[50px] items-center justify-center border-b-2 border-[#76b9ed] bg-[#3b3d40]"><svg class="h-6 w-6"><use href="#misa"/></svg></button>
    <button aria-label="Chrome" class="flex w-[40px] items-center justify-center border-b-2 border-[#76b9ed]"><svg class="h-[22px] w-[22px]" viewBox="0 0 22 22"><circle cx="11" cy="11" r="11" fill="#fbbc05"/><path d="M1.500 5.500A11 11 0 0 1 20.500 5.500H11L6 13z" fill="#ea4335"/><path d="M1.500 5.500A11 11 0 0 0 10 22l5-8.500-8 0z" fill="#34a853"/><circle cx="11" cy="11" r="5.200" fill="#fff"/><circle cx="11" cy="11" r="4" fill="#4285f4"/></svg></button>
  </div>
  <div class="flex-1"></div>
  <div class="flex items-center text-[12px]">
    <svg class="mr-[22px] h-[16px] w-[15px]" viewBox="0 0 15 16"><circle cx="10.500" cy="3.500" r="2.800" stroke="#fff" fill="none" stroke-width="1.200"/><circle cx="4.500" cy="8.500" r="2.500" stroke="#fff" fill="none" stroke-width="1.200"/><path d="M.7 15.500c0-5.500 7.600-5.500 7.600 0M8.500 7.800c3-1.500 5.800 0 6 3" stroke="#fff" fill="none" stroke-width="1.200"/></svg>
    <svg class="mr-[9px] h-[8px] w-[13px]" viewBox="0 0 13 8"><path d="M1 7l5.500-5.500L12 7" stroke="#fff" fill="none" stroke-width="1.300"/></svg>
    <svg class="mr-[7px] h-[14px] w-[17px]" viewBox="0 0 17 14"><path d="M5.500 1.500h11v8h-11M1 .5h4v5H1zM3 5.500V12M11 9.500V13M7 13h8" stroke="#fff" fill="none" stroke-width="1.200"/></svg>
    <svg class="mr-[10px] h-[13px] w-[17px]" viewBox="0 0 17 13"><path d="M1 4.500h2.500L7 1v11L3.500 8.500H1z" stroke="#fff" fill="none" stroke-width="1.100"/><path d="M9 4.500c1 1.500 1 2.500 0 4" stroke="#fff" fill="none"/><path d="M11.500 3c2 2.500 2 4.500 0 7M14 1.500c3 3.500 3 6.500 0 10" stroke="#777" fill="none"/></svg>
    <span class="w-[35px]">ENG</span>
    <div class="w-[54px] text-center leading-[18px] whitespace-nowrap"><div>10:55 PM</div><div>8/6/2019</div></div>
    <div class="relative ml-[16px] h-[25px] w-[39px]"><svg class="h-[25px] w-[25px]" viewBox="0 0 25 25"><path d="M1 3h16v13H9l-4 4v-4H1z" fill="#fff"/><path d="M4 6.500h10M4 9.500h10M4 12.500h6" stroke="#070a0f" stroke-width="1.200"/><circle cx="16.500" cy="17" r="7.700" fill="#2b2e33" stroke="#9a9a9a"/></svg><span class="absolute top-[10px] left-[9px] w-[15px] text-center text-[11px] leading-[14px] font-bold">5</span></div>
    <span class="mr-[3px] h-10 w-px bg-[#555]"></span>
  </div>
</div>

<!-- Voucher dialog: a floating window over the desktop -->
<section role="dialog" aria-label="Chứng từ mua hàng" class="absolute top-[224px] right-[44px] flex w-[949px] flex-col border border-[#6495c8] bg-[#cbdaf0] shadow-[1px_1px_4px_rgba(0,0,0,0.450)]">
  <div class="flex h-[30px] items-center bg-[#6495c8] pl-[3px] font-[Roboto,sans-serif] text-[12px] text-white">
    <svg class="h-[14px] w-[14px]"><use href="#note"/></svg>
    <span class="ml-[6px] flex-1 truncate">Mua hàng trong nước không qua kho - Tiền mặt - Công ty CP thương mại và dịch vụ Minh Nhật An</span>
    <button aria-label="Thu nhỏ" class="mr-[11px]"><svg class="h-[10px] w-[7px]" viewBox="0 0 7 10"><path d="M0 6h7" stroke="#000" stroke-width="2"/></svg></button>
    <button aria-label="Phóng to" class="mr-[13px]"><svg class="h-[10px] w-[11px]" viewBox="0 0 11 10"><path d="M.5 1h10v8.500H.5z" stroke="#000" fill="none"/><path d="M0 1.500h11" stroke="#000" stroke-width="3"/></svg></button>
    <button aria-label="Đóng" class="mr-[6px]"><svg class="h-[8px] w-[8px]" viewBox="0 0 8 8"><path d="M1 1l6 6M7 1L1 7" stroke="#000" stroke-width="2.200"/></svg></button>
  </div>
  <div class="flex h-[43px] bg-[#adc7e7] pl-[5px] font-['Open_Sans',sans-serif] text-[12px]" id="dlg-toolbar"></div>

  <div class="px-2">
    <div class="flex pt-[13px]">
      <div class="w-[224px] shrink-0">
        <h2 class="pl-1 font-['Open_Sans',sans-serif] text-[20px] leading-[22px] font-bold whitespace-nowrap">Chứng từ mua hàng</h2>
        <div class="mt-[4px] flex h-[21px] items-center">
          <input type="radio" name="tt" id="r1" disabled class="h-[13px] w-[13px] appearance-none rounded-full border border-[#b0b8c4] bg-white"><label for="r1" class="ml-[2px] w-[101px]">Chưa thanh toán</label>
          <input type="radio" name="tt" id="r2" checked disabled class="h-[13px] w-[13px] appearance-none rounded-full border border-[#b0b8c4] bg-[#c4c4c4] shadow-[inset_0_0_0_2px_#fff]"><label for="r2" class="ml-[2px]">Thanh toán ngay</label>
        </div>
      </div>
      <div class="flex flex-1 flex-col gap-[6px]">
        <input aria-label="Loại chứng từ" readonly value="2. Mua hàng trong nước không qua kho" class="h-[21px] w-[256px] border border-[#7ba0d0] bg-[#e4e4e4] px-[2px]">
        <div class="flex gap-[6px]">
          <input aria-label="Hình thức thanh toán" readonly value="Tiền mặt" class="h-[21px] w-[136px] border border-[#7ba0d0] bg-[#e4e4e4] px-[2px]">
          <input aria-label="Hóa đơn kèm" readonly value="Nhận kèm hóa đơn" class="h-[21px] w-[136px] border border-[#7ba0d0] bg-[#e4e4e4] px-[2px]">
        </div>
      </div>
      <div class="mt-[26px] mr-[2px] flex h-[23px] w-[144px] items-center justify-center border-2 border-[#c40008] text-[12px] font-bold whitespace-nowrap text-[#c40008]">ĐÃ NHẬN HÓA ĐƠN</div>
    </div>

    <div class="mt-[6px] flex h-[19px]">
      <button class="w-[73px] border border-b-0 border-[#7ba0d0] bg-[#ffe49b] font-bold">Phiếu ch<u>i</u></button>
      <button class="w-[67px] border-t border-r border-[#7ba0d0]"><u>H</u>óa đơn</button>
    </div>
    <div class="flex h-[193px] gap-[12px] border border-[#7ba0d0] px-[9px] pt-[8px] pb-[8px]">
      <fieldset class="min-w-0 flex-1 border border-[#7ba0d0] pr-[8px] pl-[8px]">
        <legend class="ml-[-3px] px-[2px] font-bold">Thông tin chung</legend>
        <div class="grid grid-cols-[86px_1fr] gap-y-[3px] pt-[9px] leading-[21px]">
          <label for="ncc">Nhà cung cấp</label>
          <div class="flex gap-[7px]"><input id="ncc" readonly value="DA1" class="h-[21px] w-[190px] border border-[#7ba0d0] bg-[#e4e4e4] px-[5px]"><input aria-label="Tên nhà cung cấp" readonly value="Công ty TNHH Bảo Hộ Đông Á" class="h-[21px] min-w-0 flex-1 border border-[#7ba0d0] bg-[#e4e4e4] px-1"></div>
          <label for="nn">Người nhận</label><input id="nn" readonly class="h-[21px] min-w-0 border border-[#7ba0d0] bg-[#e4e4e4] px-1">
          <label for="dc">Địa chỉ</label><input id="dc" readonly value="Thọ Am, Liên Ninh, Thanh Trì, TP Thái Nguyên" class="h-[21px] min-w-0 border border-[#7ba0d0] bg-[#e4e4e4] px-1">
          <label for="ld">Lý do chi</label><input id="ld" readonly value="Chi tiền mua hàng Công ty TNHH Bảo Hộ Đông Á theo hóa đơn 0000824" class="h-[21px] min-w-0 border border-[#7ba0d0] bg-[#e4e4e4] px-1">
          <label for="nv">NV mua hàng</label>
          <div class="flex"><input id="nv" readonly class="h-[21px] w-[190px] border border-[#7ba0d0] bg-[#e4e4e4] px-1"><label for="kt" class="ml-[9px] w-[57px]">Kèm theo</label><input id="kt" readonly class="h-[21px] min-w-0 flex-1 border border-[#7ba0d0] bg-[#e4e4e4] px-1"><span class="w-[75px] pl-[5px]">chứng từ gốc</span></div>
          <span>Tham chiếu</span>
          <div class="flex justify-end"><button aria-label="Chọn tham chiếu" class="-mt-px flex h-[23px] w-[23px] items-center justify-center border border-[#7ba0d0]"><svg class="h-4 w-4"><use href="#zoomg"/></svg></button></div>
        </div>
      </fieldset>
      <fieldset class="w-[207px] border border-[#7ba0d0] pr-[7px] pl-[8px]">
        <legend class="ml-[-3px] px-[2px] font-bold">Chứng từ</legend>
        <div class="grid grid-cols-[86px_1fr] gap-y-[3px] pt-[9px] leading-[21px]">
          <label for="nht">Ngày hạch toán</label><input id="nht" readonly value="11/05/2019" class="h-[21px] min-w-0 border border-[#7ba0d0] bg-[#e4e4e4] px-1">
          <label for="nct">Ngày chứng từ</label><input id="nct" readonly value="11/05/2019" class="h-[21px] min-w-0 border border-[#7ba0d0] bg-[#e4e4e4] px-1">
          <label for="sct">Số chứng từ</label><input id="sct" readonly value="PC204" class="h-[21px] min-w-0 border border-[#7ba0d0] bg-[#e4e4e4] px-1">
        </div>
      </fieldset>
    </div>
    <div class="flex justify-center"><button aria-label="Thu gọn" class="flex h-[8px] w-[50px] items-center justify-center border border-t-0 border-[#7ba0d0] bg-[#adc7e7]"><svg class="h-[3px] w-[6px]" viewBox="0 0 6 3"><path d="M0 3h6L3 0z" fill="#fff"/></svg></button></div>

    <div class="mt-[8px] flex h-[19px]">
      <button class="w-[87px] border border-b-0 border-[#7ba0d0] bg-[#ffe49b] font-bold"><u>1</u>. Hàng tiền</button>
      <button class="w-[63px] border-t border-r border-[#7ba0d0]"><u>2</u>. Thuế</button>
      <button class="w-[85px] border-t border-r border-[#7ba0d0]"><u>3</u>. Thống kê</button>
      <button class="w-[73px] border-t border-r border-[#7ba0d0]"><u>4</u>. Chi phí</button>
      <button class="w-[130px] border-t border-r border-[#7ba0d0]"><u>5</u>. Thông tin bổ sung</button>
    </div>
    <div class="flex h-[218px] flex-col border border-[#7ba0d0] bg-white">
      <div class="min-h-0 flex-1" id="grid-voucher"></div>
      <div class="flex h-[17px] shrink-0 items-center bg-[#adc7e7]"><button aria-label="Cuộn trái" class="flex w-[17px] justify-center"><svg class="h-[7px] w-[5px]" viewBox="0 0 5 7"><path d="M5 0v7L0 3.500z"/></svg></button><span class="h-full w-[335px] bg-[#d6d6d6]"></span><span class="flex-1"></span><button aria-label="Cuộn phải" class="flex w-[17px] justify-center"><svg class="h-[7px] w-[5px]" viewBox="0 0 5 7"><path d="M0 0v7l5-3.500z"/></svg></button></div>
    </div>

    <div class="flex h-[81px] pt-[9px]">
      <div class="flex w-[118px] flex-col gap-[5px]">
        <button disabled class="h-[23px] border border-[#7ba0d0] text-[#85888f]">Phân bổ chiết khấu...</button>
        <button class="h-[23px] border border-[#7ba0d0] bg-[#adc7e7]">Xem công nợ</button>
      </div>
      <dl class="-mt-[5px] ml-[96px] grid flex-1 grid-cols-[236px_140px_1fr_auto] leading-[26px] [&_dd]:text-right [&_dt]:font-bold">
        <dt>Tổng tiền hàng</dt><dd>11.300.000.000</dd><dt class="pl-[22px]">Tiền thuế GTGT</dt><dd>1.130.000.000</dd>
        <dt>Tiền chiết khấu</dt><dd>0</dd><dt class="pl-[22px]">Chi phí mua hàng</dt><dd>0</dd>
        <dt>Tổng tiền thanh toán</dt><dd>12.430.000.000</dd><dt class="pl-[22px]">Tổng giá trị</dt><dd>11.300.000.000</dd>
      </dl>
    </div>
  </div>
  <div class="flex h-[23px] items-end justify-end bg-[#adc7e7] p-px"><svg class="h-[11px] w-[11px]" viewBox="0 0 11 11"><path d="M9 1h2v2H9zM9 5h2v2H9zM5 5h2v2H5zM9 9h2v2H9zM5 9h2v2H5zM1 9h2v2H1z" fill="#3c5a8c"/></svg></div>
</section>

<!-- Activation watermark -->
<div class="pointer-events-none absolute right-[84px] bottom-[89px] w-[237px] font-['Open_Sans',sans-serif] whitespace-nowrap text-black/25">
  <div class="text-[19px] leading-[26px]">Activate Windows</div>
  <div class="text-[14px] leading-[20px]">Go to Settings to activate Windows.</div>
</div>

<script>
const el = id => document.getElementById(id);
const icon = (name, cls = 'h-4 w-4 shrink-0') => `<svg class="${cls}" aria-hidden="true"><use href="#${name}"/></svg>`;

el('menu').innerHTML = ['Tệp', 'Danh mục', 'Nghiệp vụ', 'Hệ thống', 'Tiện ích', 'Trợ giúp']
  .map(t => `<button class="pr-[12px] whitespace-nowrap">${t}</button>`).join('');

const grip = '<span class="mr-[8px] h-4 w-[5px] border-x border-dotted border-[#8aa3c2]"></span>';
const bar = '<span class="mr-[5px] h-4 w-[2px] bg-[#8fb2de]"></span>';
const tool = (ic, t, w, gap, off) => `<button class="flex items-center ${gap} whitespace-nowrap ${off ? 'text-[#85888f]' : ''}" style="width:${w}px">${icon(ic)}<span>${t}</span></button>`;
el('toolbar').innerHTML = grip + tool('list', 'Chọn chi nhánh làm việc', 165, 'gap-[10px]') + tool('search', 'Tìm kiếm...', 88, 'gap-[8px]')
  + tool('report', 'Báo cáo', 74, 'gap-[7px]') + tool('cal', 'Ngày hạch toán', 117, 'gap-[8px]') + grip
  + tool('docadd', 'Thêm', 60, 'gap-[8px]') + '<svg class="mr-[5px] h-[4px] w-[6px]" viewBox="0 0 6 4"><path d="M0 0h6L3 4z"/></svg>'
  + tool('doceditg', 'Xem', 55, 'gap-[6px]', 1) + tool('docdelg', 'Xóa', 50, 'gap-[6px]', 1) + tool('pen', 'Ghi sổ', 66, 'gap-[6px]', 1)
  + tool('penx', 'Bỏ ghi', 64, 'gap-[6px]', 1) + bar + tool('xls', 'Xuất khẩu', 84, 'gap-[7px]') + bar + tool('mail', 'Phản hồi', 77, 'gap-[7px]') + bar + tool('help', 'Giúp', 60, 'gap-[7px]');

const tasks = ['Đơn mua hàng', 'Hợp đồng mua hàng', '-', 'Chứng từ mua hàng hóa', 'Chứng từ mua hàng nhiều...', 'Chứng từ mua dịch vụ', '-', 'Trả lại hàng mua', 'Giảm giá hàng mua', '-', 'Nhận hóa đơn', '-', 'Trả tiền nhà cung cấp', '-', 'Đối trừ chứng từ', 'Đối trừ chứng từ nhiều đối t...', 'Bỏ đối trừ', 'Bù trừ công nợ'];
el('tasks').innerHTML = tasks.map(t => t === '-'
  ? '<hr class="mt-[2px] mb-[3px] shrink-0 border-[#7ba0d0]">'
  : `<a href="#" class="flex h-[23px] shrink-0 items-center gap-[6px] pb-[2px] whitespace-nowrap">${icon('docadd')}<span>${t}</span></a>`).join('');

const modules = [['n-quy', 'Quỹ'], ['n-bank', 'Ngân hàng'], ['n-cart', 'Mua hàng'], ['n-einv', 'Hóa đơn điện tử'], ['n-sell', 'Bán hàng'], ['n-inv', 'Quản lý hóa đơn'], ['n-kho', 'Kho'], ['n-tool', 'Công cụ dụng cụ'], ['n-asset', 'Tài sản cố định'], ['n-cal', 'Tiền lương', 'n-bag'], ['n-tax', 'Thuế'], ['n-cal', 'Giá thành', 'n-box']];
el('modules').innerHTML = modules.map(([ic, t, extra], i) =>
  `<a href="#" class="flex h-8 items-center gap-[5px] border-t border-[#7ba0d0] pl-[3px] font-['Open_Sans',sans-serif] text-[11px] font-bold ${i === 2 ? 'border-b border-b-[#f59a40] bg-[#ffe49b]' : ''}"><span class="relative h-6 w-6">${icon(ic, 'h-6 w-6')}${extra ? icon(extra, 'absolute bottom-0 -left-px h-[11px] w-[11px]') : ''}</span><span>${t}</span></a>`).join('');

el('shortcuts').innerHTML = ['s-book', 's-doc', 's-chart', 's-coin', 's-money', 's-plan'].map(s => `<button aria-label="Phân hệ">${icon(s)}</button>`).join('')
  + '<button aria-label="Thêm phân hệ" class="ml-[4px]"><svg class="h-[14px] w-[8px]" viewBox="0 0 8 14"><path d="M.5.500l3 2.800-3 2.700M4 .5l3 2.800L4 6" stroke="#000" stroke-width="1.400" fill="none"/><path d="M1 10h6l-3 3.500z"/></svg></button>';

el('tabs').innerHTML = ['Đơn mua hàng', 'Hợp đồng mua hàng', 'Mua hàng hóa, dịch vụ', 'Nhận hóa đơn', 'Trả lại hàng mua', 'Giảm giá hàng mua', 'Công nợ', 'Báo cáo phân tích', 'Quy trình'].map((t, i) =>
  i === 2 ? `<button class="border border-b-0 border-[#7ba0d0] bg-[#ffe49b] px-[5px] font-bold whitespace-nowrap">${t}</button>` : `<button class="pr-[8px] pl-[9px] whitespace-nowrap">${t}</button>`).join('');

/* Data grid. Column: [title, width, pin, options]; options: a = align, s = shaded, f = filter kind, frozen. */
const ALIGN = { r: 'text-right', c: 'text-center', l: 'text-left' };
const SOLID = 'border-r border-b border-[#7ba0d0]';
const DOT = 'border-r border-b border-dotted border-[#b4b4b4]';
const CHECK = '<input type="checkbox" disabled aria-label="Chọn" class="mx-auto block h-[13px] w-[13px] appearance-none border border-[#9fb8dc] bg-[#e2e2e6] shadow-[inset_0_0_0_1px_#fff]">';
function filterCell(o) {
  if (!o.f) return '';
  const op = o.f === 'box' ? '<span class="flex h-[13px] w-[13px] items-center justify-center border border-[#2a2a60] bg-white"><span class="h-[7px] w-[7px] bg-[#6464cc]"></span></span>'
    : `<span class="text-[13px] font-bold text-[#2a2a60]">${o.f === 'le' ? '≤' : '='}</span>`;
  const value = o.tri ? '<input type="checkbox" aria-label="Lọc" class="mx-auto h-[14px] w-[14px] appearance-none border-2 border-[#8fa3b8] bg-[#1d7fa8] shadow-[inset_0_0_0_1px_#12506e]">' : `<span class="pl-[5px]">${o.fv || ''}</span>`;
  return `<div class="flex h-[19px] items-center"><span class="flex h-[18px] w-[19px] items-center justify-center border-r border-dotted border-[#999]">${op}</span>${value}</div>`;
}
function grid(id, cols, { row, foot, blanks, filter }) {
  const o = c => c[3] || {};
  const edge = c => o(c).frozen ? 'border-b border-dotted border-b-[#b4b4b4] border-r border-r-[#808080] [border-right-style:solid]' : DOT;
  const head = cols.map(c => `<th class="${SOLID} bg-[#adc7e7] p-0 font-normal"><div class="flex items-center"><span class="flex-1 text-center whitespace-nowrap">${c[0]}</span>${o(c).sort ? '<svg class="mr-[3px] h-[8px] w-[8px]" viewBox="0 0 8 8"><path d="M4 1l3.500 6.500H.5z" stroke="#fff" fill="none"/></svg>' : ''}${c[2] === 'v' ? icon('pinv', 'mr-px h-[12px] w-[9px] shrink-0') : c[2] === 'h' ? icon('pinh', 'h-[9px] w-[12px] shrink-0') : ''}</div></th>`).join('');
  const blank = `${cols.map(c => `<td class="${edge(c)} ${o(c).s ? 'bg-[#e4e4e4]' : ''} p-0"></td>`).join('')}`;
  const ft = [];
  for (let i = 0; i < cols.length;) {
    let n = 1;
    if (!foot[i]) while (i + n < cols.length && !foot[i + n] && !o(cols[i + n - 1]).frozen) n++;
    ft.push(`<td colspan="${n}" class="border-t border-r border-b border-[#7ba0d0] py-0 pr-[3px] pl-1 ${foot[i] ? 'bg-[#d6d6d6]' : 'bg-[#efefef]'} ${/^\S+$/.test(foot[i] || '') ? 'text-right' : 'text-left'} whitespace-nowrap">${foot[i] || ''}</td>`);
    i += n;
  }
  el(id).innerHTML = `<table class="h-full w-full table-fixed border-separate border-spacing-0">
    <colgroup>${cols.map(c => `<col${c[1] ? ` style="width:${c[1]}px"` : ''}>`).join('')}</colgroup>
    <thead><tr class="h-[20px]">${head}</tr>${filter ? `<tr class="h-[20px]">${cols.map(c => `<td class="${edge(c)} bg-[#ffffe1] p-0">${filterCell(o(c))}</td>`).join('')}</tr>` : ''}</thead>
    <tbody><tr class="h-[20px]">${cols.map((c, i) => `<td class="${edge(c)} ${o(c).s ? 'bg-[#e4e4e4]' : ''} overflow-hidden py-0 pr-[2px] pl-[5px] whitespace-nowrap ${ALIGN[o(c).a || 'l']}">${row[i] || ''}</td>`).join('')}</tr>
    ${`<tr class="h-[20px]">${blank}</tr>`.repeat(blanks)}<tr>${blank}</tr></tbody>
    <tfoot><tr class="h-[18px]">${ft.join('')}</tr></tfoot></table>`;
}

grid('grid-main', [
  ['Ngày chứng từ', 105, 'v', { a: 'c', f: 'eq' }], ['Số chứng từ', 105, 'v', { f: 'box' }], ['Số hóa đơn', 105, 'v', { f: 'box', fv: '824' }],
  ['Ngày hạch toán', 105, 'v', { a: 'c', f: 'eq' }], ['Nhà cung cấp', 210, 'v', { f: 'box', frozen: 1 }], ['', 21, 'h', { a: 'r' }],
  ['Tiền thuế GTGT', 120, 'h', { a: 'r', f: 'le' }], ['Tổng tiền thanh toán', 120, 'h', { a: 'r', f: 'le' }], ['Chi phí mua hàng', 140, 'h', { a: 'r', f: 'le' }],
  ['Giá trị nhập kho', 140, 'h', { a: 'r', f: 'le' }], ['Nhận hóa đơn', 110, 'h', { f: 'box' }], ['Là chi phí mua hàng', 129, 'h', { f: 'box', tri: 1 }],
  ['Loại chứng từ', 210, 'h', { f: 'box' }], ['ghi chú', 0, 'h', { f: 'box', sort: 1 }]
], { filter: 1, blanks: 26,
  row: ['11/05/2019', 'PC204', '0000824', '11/05/2019', 'Công ty TNHH Bảo Hộ Đông Á', '0', '1.130.000.000', '12.430.000.000', '0', '0', 'Đã nhận HĐ', CHECK, 'Mua hàng trong nước không qua kho - T', ''],
  foot: { 3: 'Số dòng = 1', 5: '0', 6: '1.130.000.000', 7: '12.430.000.000', 8: '0', 9: '0' } });

grid('grid-detail', [
  ['Mã hàng', 100, 'v', { frozen: 1 }], ['Tên hàng', 210, 'h'], ['TK chi phí', 95, 'h'], ['TK tiền', 95, 'h'], ['ĐVT', 75, 'h'],
  ['Số lượng', 110, 'h', { a: 'r' }], ['Đơn giá', 110, 'h', { a: 'r' }], ['Thành tiền', 120, 'h', { a: 'r' }], ['Chi phí mua hàng', 120, 'h', { a: 'r' }],
  ['Tổng giá trị', 120, 'h', { a: 'r', s: 1 }], ['CP không hợp lý', 100, 'h'], ['Ghi chú', 0, 'h']
], { blanks: 7,
  row: ['QUAN AO BHLD', 'Quần áo bảo hộ lao động', '632', '1111', 'Bộ', '100.000,00', '113.000,00', '11.300.000.000', '0', '11.300.000.000', '', ''],
  foot: { 0: 'Số dòng = 1', 5: '100.000,00', 7: '11.300.000.000', 8: '0', 9: '11.300.000.000' } });

grid('grid-voucher', [
  ['Mã hàng', 100, 'v', { frozen: 1 }], ['', 29, 'h'], ['Số lượng', 110, 'h', { a: 'r' }], ['Đơn giá', 110, 'h', { a: 'r' }], ['Thành tiền', 120, 'h', { a: 'r' }],
  ['Chi phí mua hàng', 120, 'h', { a: 'r' }], ['Tổng giá trị', 120, 'h', { a: 'r', s: 1 }], ['CP không hợp lý', 100, 'h'], ['Ghi chú', 0, 'h']
], { blanks: 7,
  row: ['QUAN AO BHLD', '', '100.000,00', '113.000,00', '11.300.000.000', '0', '11.300.000.000', CHECK, 'HĐ 0000091 ngày 16/'],
  foot: { 0: 'Số dòng = 1', 2: '100.000,00', 4: '11.300.000.000', 5: '0', 6: '11.300.000.000' } });

/* Status bar cells: [text, width (0 = fill), icon] */
el('status').innerHTML = [['Máy chủ: MAYCHU\\MISASME2017', 201, 'srv'], ['Tên DLKT: 2019_MINH NHAT AN', 193, 'db'], ['Người dùng: Admin', 118, 'user'], ['', 10], ['', 0], ['<b>Tổng đài tư vấn: MISA SUPPORT</b>', 181], ['OVR', 31], ['NUM', 32], ['', 37], ['', 36], ['10:55 CH', 54], ['06/08/2019', 61]]
  .map(([t, w, ic]) => `<span class="flex h-[20px] items-center gap-[2px] border border-[#7ba0d0] pl-[2px] whitespace-nowrap ${w ? 'shrink-0' : 'flex-1'}" ${w ? `style="width:${w}px"` : ''}>${ic ? icon(ic, 'h-[14px] w-[14px] shrink-0') : ''}<span class="text-[11px]">${t}</span></span>`).join('');

/* Dialog toolbar: [label, width, icon, disabled]; '|' separator, number = drop-down arrow cell */
el('dlg-toolbar').innerHTML = [['Trước', 38, 'left'], 12, ['Sau', 36, 'right'], 6, ['Thêm', 48, 'docadd'], ['Sửa', 34, 'doceditg', 1], ['Sửa nhanh', 78, 'docedit'], ['Cất', 28, 'save', 1], ['Xóa', 44, 'docdelg', 1], ['Hoãn', 37, 'undo', 1], ['Bỏ ghi', 56, 'penxc'], '|', ['Nhận HĐ', 70, 'invg', 1], '|', ['Nạp', 44, 'reload'], ['Tiện ích', 50, 'tools'], 12, ['Mẫu', 42, 'ruler'], 6, '|', ['In', 32, 'print'], 6, '|', ['Phản hồi', 70, 'mail'], '|', ['Giúp', 46, 'help'], ['Đóng', 40, 'power']]
  .map(x => x === '|' ? '<span class="mt-[9px] h-[23px] w-[2px] shrink-0 bg-[#8fb2de]"></span>'
    : typeof x === 'number' ? `<button aria-label="Mở danh sách" class="flex shrink-0 items-center justify-center" style="width:${x}px"><svg class="h-[3px] w-[6px] shrink-0" viewBox="0 0 6 3"><path d="M0 0h6L3 3z"/></svg></button>`
    : `<button class="flex shrink-0 flex-col items-center pt-1 whitespace-nowrap ${x[3] ? 'text-[#85888f]' : ''}" style="width:${x[1]}px">${icon(x[2])}<span class="mt-[4px]">${x[0]}</span></button>`).join('');
</script>
</body>
</html>
